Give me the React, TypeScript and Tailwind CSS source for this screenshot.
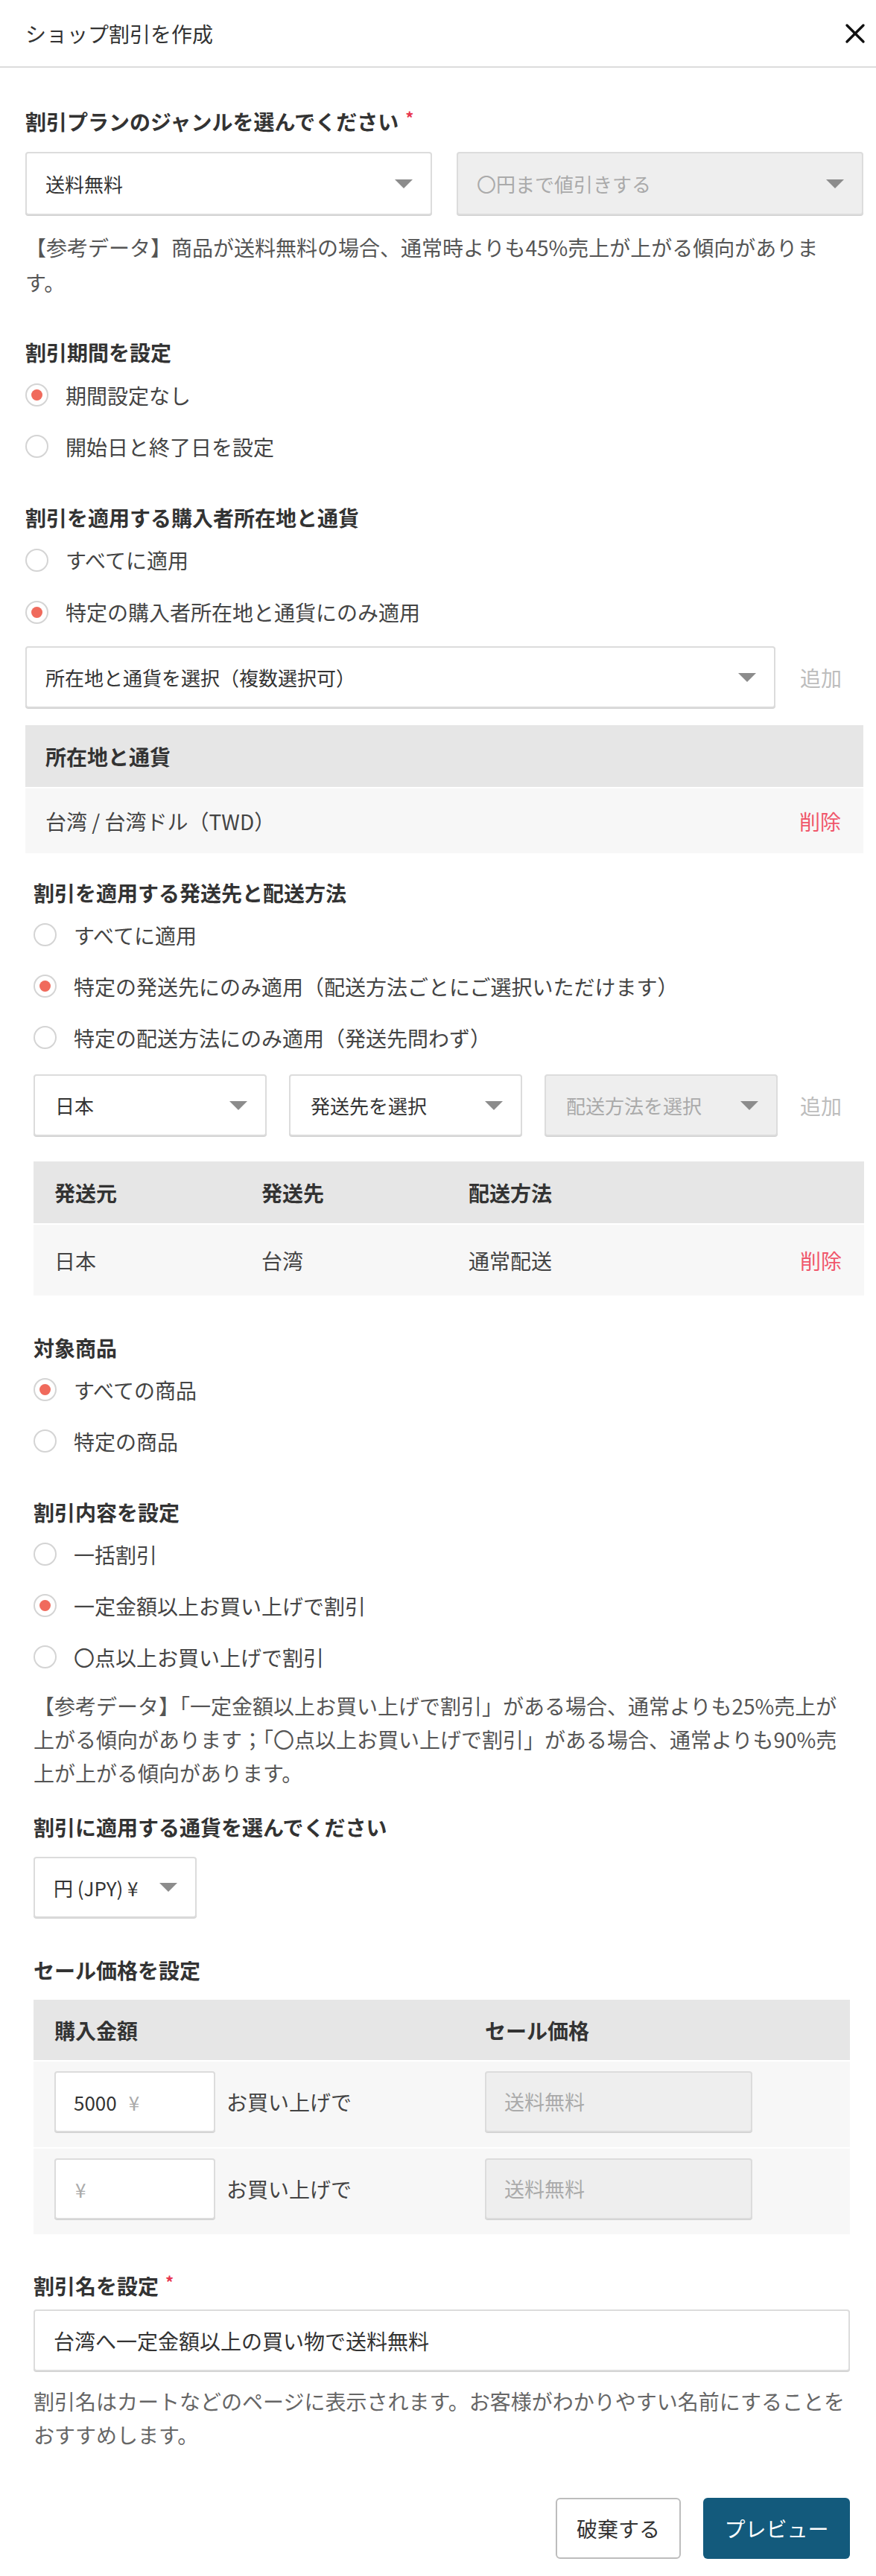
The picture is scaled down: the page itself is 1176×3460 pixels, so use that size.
import React from "react";

const Arrow = () => (
  <svg width="24" height="12" viewBox="0 0 24 12" className="shrink-0">
    <polygon points="0,0 24,0 12,12" fill="#8c8c8c" />
  </svg>
);

type SelectProps = {
  text: string;
  disabled?: boolean;
  className: string;
  padL?: string;
};

const Select = ({ text, disabled, className, padL = "pl-[25px]" }: SelectProps) => (
  <div
    className={`flex items-center justify-between rounded-[4px] border-2 ${
      disabled ? "border-[#dcdcdc] bg-[#eeeeee] text-[#aaaaaa]" : "border-[#dcdcdc] bg-white text-[#333333]"
    } ${padL} pr-[24px] text-[26px] shadow-[0_1px_0_#d0d0d0] ${className}`}
  >
    <span className="whitespace-nowrap">{text}</span>
    <Arrow />
  </div>
);

const Radio = ({ label, checked, h = "h-[69px]" }: { label: string; checked?: boolean; h?: string }) => (
  <div className={`flex items-center gap-[23px] ${h}`}>
    <span className="flex h-[31px] w-[31px] shrink-0 items-center justify-center rounded-full border-2 border-[#d4d4d4] bg-white">
      {checked && <span className="h-[15px] w-[15px] rounded-full bg-[#f06a5c]" />}
    </span>
    <span className="text-[28px] text-[#444444]">{label}</span>
  </div>
);

const Label = ({ children, required, className = "" }: { children: React.ReactNode; required?: boolean; className?: string }) => (
  <div className={`flex h-[40px] items-center text-[28px] font-bold text-[#333333] ${className}`}>
    <span>{children}</span>
    {required && <span className="mb-[12px] ml-[9px] text-[22px] leading-none text-[#e8364f]">*</span>}
  </div>
);

export default function App() {
  return (
    <div
      className="w-[1176px] bg-white pb-[22px]"
      style={{ fontFamily: '"Noto Sans CJK JP", "Noto Sans", sans-serif' }}
    >
      {/* Header */}
      <div className="flex h-[91px] items-center justify-between border-b-2 border-[#dcdcdc] pl-[34px] pr-[14px]">
        <span className="text-[28px] text-[#333333]">ショップ割引を作成</span>
        <svg width="28" height="28" viewBox="0 0 28 28">
          <line x1="3" y1="3" x2="25" y2="25" stroke="#111" strokeWidth="3.4" strokeLinecap="round" />
          <line x1="25" y1="3" x2="3" y2="25" stroke="#111" strokeWidth="3.4" strokeLinecap="round" />
        </svg>
      </div>

      {/* Top area */}
      <div className="pl-[34px] pr-[17px]">
        <Label required className="mt-[52px]">割引プランのジャンルを選んでください</Label>
        <div className="mt-[21px] flex gap-[33px]">
          <Select text="送料無料" className="h-[85px] flex-1" />
          <Select text="〇円まで値引きする" disabled className="h-[85px] flex-1" />
        </div>
        <p className="mt-[20px] w-[1100px] text-[28px] leading-[47px] text-[#555555]">
          【参考データ】商品が送料無料の場合、通常時よりも45%売上が上がる傾向があります。
        </p>

        <Label className="mt-[50px]">割引期間を設定</Label>
        <div className="mt-[3px]">
          <Radio label="期間設定なし" checked />
          <Radio label="開始日と終了日を設定" />
        </div>

        <Label className="mt-[41px]">割引を適用する購入者所在地と通貨</Label>
        <div className="mt-[2px]">
          <Radio label="すべてに適用" h="h-[70px]" />
          <Radio label="特定の購入者所在地と通貨にのみ適用" checked h="h-[70px]" />
        </div>
        <div className="mt-[11px] flex items-center">
          <Select text="所在地と通貨を選択（複数選択可）" className="h-[83px] w-[1007px]" />
          <span className="ml-[33px] text-[28px] text-[#bdbdbd]">追加</span>
        </div>
        <div className="mt-[23px]">
          <div className="flex h-[83px] items-center bg-[#e6e6e6] pl-[27px] text-[28px] font-bold text-[#333333]">
            所在地と通貨
          </div>
          <div className="mt-[2px] flex h-[87px] items-center justify-between bg-[#f7f7f7] pl-[27px] pr-[30px] text-[28px] text-[#444444]">
            <span>台湾 / 台湾ドル（TWD）</span>
            <span className="text-[#f0576b]">削除</span>
          </div>
        </div>
      </div>

      {/* Lower area */}
      <div className="pl-[45px] pr-[16px]">
        <Label className="mt-[33px]">割引を適用する発送先と配送方法</Label>
        <div className="mt-[2px]">
          <Radio label="すべてに適用" />
          <Radio label="特定の発送先にのみ適用（配送方法ごとにご選択いただけます）" checked />
          <Radio label="特定の配送方法にのみ適用（発送先問わず）" />
        </div>
        <div className="mt-[15px] flex items-center gap-[30px]">
          <Select text="日本" className="h-[83px] w-[313px]" padL="pl-[27px]" />
          <Select text="発送先を選択" className="h-[83px] w-[313px]" padL="pl-[27px]" />
          <Select text="配送方法を選択" disabled className="h-[83px] w-[313px]" padL="pl-[27px]" />
          <span className="text-[28px] text-[#bdbdbd]">追加</span>
        </div>
        <div className="mt-[34px]">
          <div className="flex h-[83px] items-center bg-[#e6e6e6] pl-[28px] text-[28px] font-bold text-[#333333]">
            <span className="w-[278px]">発送元</span>
            <span className="w-[278px]">発送先</span>
            <span>配送方法</span>
          </div>
          <div className="mt-[2px] flex h-[95px] items-center bg-[#f7f7f7] pl-[28px] pr-[30px] text-[28px] text-[#444444]">
            <span className="w-[278px]">日本</span>
            <span className="w-[278px]">台湾</span>
            <span className="flex-1">通常配送</span>
            <span className="text-[#f0576b]">削除</span>
          </div>
        </div>

        <Label className="mt-[50px]">対象商品</Label>
        <div className="mt-[2px]">
          <Radio label="すべての商品" checked />
          <Radio label="特定の商品" />
        </div>

        <Label className="mt-[41px]">割引内容を設定</Label>
        <div className="mt-[2px]">
          <Radio label="一括割引" />
          <Radio label="一定金額以上お買い上げで割引" checked />
          <Radio label="〇点以上お買い上げで割引" />
        </div>
        <p className="mt-[9px] w-[1090px] text-[28px] leading-[45px] text-[#555555]">
          【参考データ】「一定金額以上お買い上げで割引」がある場合、通常よりも25%売上が上がる傾向があります；「〇点以上お買い上げで割引」がある場合、通常よりも90%売上が上がる傾向があります。
        </p>

        <Label className="mt-[30px]">割引に適用する通貨を選んでください</Label>
        <Select text="円 (JPY) ¥" className="mt-[20px] h-[82px] w-[219px]" />

        <Label className="mt-[50px]">セール価格を設定</Label>
        <div className="mt-[20px] w-[1096px]">
          <div className="flex h-[81px] items-center bg-[#e6e6e6] pl-[28px] text-[28px] font-bold text-[#333333]">
            <span className="w-[578px]">購入金額</span>
            <span>セール価格</span>
          </div>
          {[
            { v: "5000", pl: "pl-[24px]" },
            { v: "", pl: "pl-[26px]" },
          ].map((r, i) => (
            <div key={i} className="mt-[2px] flex h-[115px] items-start bg-[#f7f7f7] pl-[28px] pt-[13px]">
              <div className="flex w-[578px] items-center">
                <div
                  className={`flex h-[82px] w-[216px] items-center rounded-[4px] border-2 border-[#dcdcdc] bg-white ${r.pl} text-[26px] shadow-[0_1px_0_#d0d0d0]`}
                >
                  {r.v && <span className="text-[#333333]">{r.v}</span>}
                  <span className={`${r.v ? "ml-[16px]" : ""} text-[#aaaaaa]`}>¥</span>
                </div>
                <span className="ml-[15px] text-[28px] text-[#444444]">お買い上げで</span>
              </div>
              <div className="flex h-[82px] w-[359px] items-center rounded-[4px] border-2 border-[#dcdcdc] bg-[#eeeeee] pl-[24px] text-[27px] text-[#aaaaaa] shadow-[0_1px_0_#d0d0d0]">
                送料無料
              </div>
            </div>
          ))}
        </div>

        <Label required className="mt-[49px]">割引名を設定</Label>
        <div className="mt-[12px] flex h-[83px] w-[1096px] items-center rounded-[4px] border-2 border-[#dcdcdc] bg-white pl-[25px] text-[28px] text-[#333333] shadow-[0_1px_0_#d0d0d0]">
          台湾へ一定金額以上の買い物で送料無料
        </div>
        <p className="mt-[18px] w-[1096px] text-[28px] leading-[45px] text-[#666666]">
          割引名はカートなどのページに表示されます。お客様がわかりやすい名前にすることをおすすめします。
        </p>

        <div className="mt-[62px] flex w-[1096px] justify-end gap-[30px]">
          <button className="flex h-[82px] w-[168px] items-center justify-center rounded-[6px] border-2 border-[#bdbdbd] bg-white text-[28px] text-[#333333]">
            破棄する
          </button>
          <button className="flex h-[82px] w-[197px] items-center justify-center rounded-[6px] bg-[#135a7c] text-[28px] text-white">
            プレビュー
          </button>
        </div>
      </div>
    </div>
  );
}
